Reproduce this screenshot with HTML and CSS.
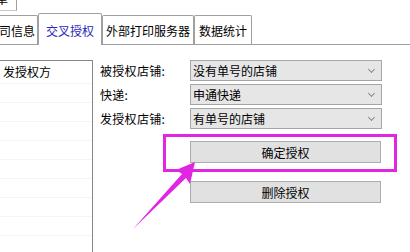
FILE: index.html
```html
<!DOCTYPE html>
<html lang="zh-CN">
<head>
    <meta charset="UTF-8">
    <title>交叉授权</title>
    <link rel="stylesheet" href="styles.css">
</head>
<body>
    <div class="top-tab"><span>单</span></div>
    <div class="tabs">
        <div class="tab tab-first">公司信息</div>
        <div class="tab active">交叉授权</div>
        <div class="tab tab-print">外部打印服务器</div>
        <div class="tab tab-stats">数据统计</div>
    </div>

    <div class="content">
        <div class="side-list">
            <div class="side-row">发授权方</div>
            <div class="side-row"></div>
            <div class="side-row"></div>
            <div class="side-row"></div>
            <div class="side-row"></div>
            <div class="side-row"></div>
            <div class="side-row"></div>
            <div class="side-row"></div>
            <div class="side-row"></div>
            <div class="side-row"></div>
        </div>

        <div class="form">
            <div class="fields">
                <label class="field-label">被授权店铺:</label>
                <div class="combo"><span>没有单号的店铺</span><i class="chev"></i></div>
                <label class="field-label">快递:</label>
                <div class="combo"><span>申通快递</span><i class="chev"></i></div>
                <label class="field-label">发授权店铺:</label>
                <div class="combo"><span>有单号的店铺</span><i class="chev"></i></div>
            </div>
            <div class="actions">
                <button class="btn">确定授权</button>
                <button class="btn">删除授权</button>
            </div>
        </div>
    </div>

    <!-- annotation overlay -->
    <div class="mark-box"></div>
    <svg class="mark-arrow" width="410" height="252" viewBox="0 0 410 252">
        <polygon points="195,162 176,170 182,174 133,229 186,178 190,184" fill="#e125e3"/>
    </svg>
</body>
</html>
```

FILE: styles.css
```css
body {
    margin: 0;
    width: 410px;
    height: 252px;
    overflow: hidden;
    background: #fff;
    font-family: "Noto Sans CJK SC", "DejaVu Sans", sans-serif;
    font-size: 12px;
    color: #000;
    position: relative;
}
.top-tab {
    width: 16px;
    height: 10px;
    border-right: 1px solid #a0a0a0;
    border-bottom: 1px solid #c8c8c8;
    overflow: hidden;
    position: relative;
}
.top-tab span {
    display: block;
    margin-left: -4px;
    margin-top: -9px;
    line-height: 16px;
}
.tabs {
    display: flex;
    align-items: flex-end;
    height: 33px;
    border-bottom: 1px solid #a0a0a0;
}
.tab {
    height: 29px;
    line-height: 29px;
    border: 1px solid #a0a0a0;
    border-bottom: none;
    border-radius: 2px 2px 0 0;
    background: #fff;
    text-align: center;
    box-sizing: border-box;
    white-space: nowrap;
}
.tab-first {
    width: 54px;
    margin-left: -16px;
    text-align: right;
    padding-right: 2px;
}
.tab.active {
    width: 64px;
    height: 32px;
    line-height: 33px;
    color: #2a2ab8;
    margin-bottom: -1px;
    position: relative;
}
.tab-print {
    width: 92px;
}
.tab-stats {
    width: 58px;
}
.content {
    display: flex;
    margin-top: 15px;
}
.side-list {
    width: 93px;
    height: 200px;
    border-top: 1px solid #828790;
    border-right: 1px solid #828790;
    box-sizing: border-box;
}
.side-row {
    height: 18px;
    line-height: 22px;
    padding-left: 3px;
    border-bottom: 1px solid #f5f5f5;
}
.side-row:first-child {
    height: 22px;
}
.form {
    margin-left: 7px;
}
.fields {
    display: grid;
    grid-template-columns: 90px 192px;
    grid-auto-rows: 21px;
    row-gap: 3px;
    align-items: center;
}
.field-label {
    line-height: 21px;
    letter-spacing: 0.3px;
}
.combo {
    height: 21px;
    box-sizing: border-box;
    border: 1px solid #a6a6a6;
    background: #e6e6e6;
    display: flex;
    align-items: center;
    justify-content: space-between;
    padding: 0 7px 0 2px;
    line-height: 19px;
}
.chev {
    width: 4px;
    height: 4px;
    border-right: 1px solid #8a8a8a;
    border-bottom: 1px solid #8a8a8a;
    transform: rotate(45deg);
    margin-top: -3px;
}
.actions {
    display: flex;
    flex-direction: column;
    gap: 18px;
    margin-top: 12px;
    margin-left: 90px;
}
.btn {
    width: 191px;
    height: 22px;
    border: 1px solid #adadad;
    background: #e1e1e1;
    font-family: inherit;
    font-size: 12px;
    color: #000;
    padding: 0;
}
.mark-box {
    position: absolute;
    left: 163px;
    top: 134px;
    width: 234px;
    height: 38px;
    box-sizing: border-box;
    border: 3px solid #e125e3;
}
.mark-arrow {
    position: absolute;
    left: 0;
    top: 0;
}
```
